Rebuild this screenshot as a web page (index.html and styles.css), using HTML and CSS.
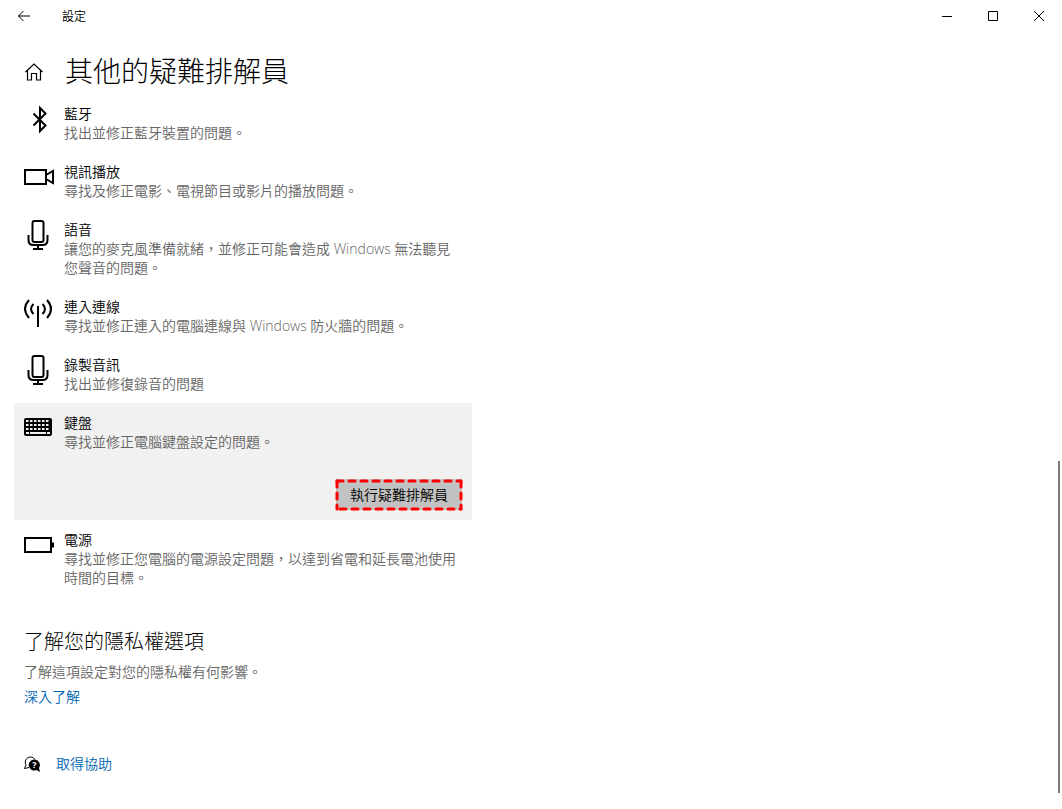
FILE: index.html
```html
<!DOCTYPE html>
<html lang="zh-Hant">
<head>
  <meta charset="UTF-8">
  <meta name="viewport" content="width=device-width, initial-scale=1.0">
  <title>設定</title>
  <link rel="stylesheet" href="styles.css">
</head>
<body>
  <header class="titlebar">
    <button class="back" aria-label="返回">
      <svg width="14" height="12" viewBox="0 0 14 12"><path d="M13 6H1.500M6.500 1L1.500 6l5 5"/></svg>
    </button>
    <span class="app-name">設定</span>
    <div class="window-controls">
      <button aria-label="最小化"><svg width="10" height="10" viewBox="0 0 10 10"><path d="M0 5.500H10"/></svg></button>
      <button aria-label="最大化"><svg width="10" height="10" viewBox="0 0 10 10"><path d="M.5.5h9v9h-9z"/></svg></button>
      <button aria-label="關閉"><svg width="10" height="10" viewBox="0 0 10 10"><path d="M0 0l10 10M10 0L0 10"/></svg></button>
    </div>
  </header>

  <main class="page">
    <div class="page-head">
      <a class="home" href="#" aria-label="首頁">
        <svg width="20" height="20" viewBox="0 0 20 20"><path d="M1.500 11L10 3l8.500 8M3.500 9.500V19h4v-6.500h5V19h4V9.500"/></svg>
      </a>
      <h1>其他的疑難排解員</h1>
    </div>

    <ul class="list">
      <li class="item">
        <svg class="icon" width="30" height="30" viewBox="0 0 30 30"><path d="M9.500 9.500l12 12L16 27V4l5.500 5.500-12 12"/></svg>
        <div class="text">
          <h2>藍牙</h2>
          <p>找出並修正藍牙裝置的問題。</p>
        </div>
      </li>
      <li class="item">
        <svg class="icon" width="30" height="30" viewBox="0 0 30 30"><path d="M1 8h21v14H1zM22 13l7-4v12l-7-4"/></svg>
        <div class="text">
          <h2>視訊播放</h2>
          <p>尋找及修正電影、電視節目或影片的播放問題。</p>
        </div>
      </li>
      <li class="item">
        <svg class="icon" width="30" height="30" viewBox="0 0 30 30"><rect x="8.500" y="1" width="11" height="21" rx="2"/><path d="M4.500 15v5q0 5 5 5h9q5 0 5-5v-5M14 25v4M9 29h10"/></svg>
        <div class="text">
          <h2>語音</h2>
          <p>讓您的麥克風準備就緒，並修正可能會造成 Windows 無法聽見您聲音的問題。</p>
        </div>
      </li>
      <li class="item">
        <svg class="icon" width="30" height="30" viewBox="0 0 30 30"><path d="M14 9v21M5 3q-8 9 0 18M9.500 7q-5 5 0 10M23 3q8 9 0 18M18.500 7q5 5 0 10"/></svg>
        <div class="text">
          <h2>連入連線</h2>
          <p>尋找並修正連入的電腦連線與 Windows 防火牆的問題。</p>
        </div>
      </li>
      <li class="item">
        <svg class="icon" width="30" height="30" viewBox="0 0 30 30"><rect x="8.500" y="1" width="11" height="21" rx="2"/><path d="M4.500 15v5q0 5 5 5h9q5 0 5-5v-5M14 25v4M9 29h10"/></svg>
        <div class="text">
          <h2>錄製音訊</h2>
          <p>找出並修復錄音的問題</p>
        </div>
      </li>
      <li class="item selected">
        <svg class="icon" width="30" height="30" viewBox="0 0 30 30">
          <rect class="solid" x="0" y="5" width="28" height="18" rx="2"/>
          <path class="keys" d="M2 8h24M2 12h24M2 16h24" stroke-dasharray="2.500 1.500"/>
          <path class="keys" d="M2 20h3M6 20h16M23 20h3"/>
        </svg>
        <div class="text">
          <h2>鍵盤</h2>
          <p>尋找並修正電腦鍵盤設定的問題。</p>
          <button class="run">執行疑難排解員
            <svg class="outline" aria-hidden="true">
              <line x1="1" y1="2" x2="125" y2="2"/>
              <line x1="4" y1="30" x2="125" y2="30"/>
              <line x1="1" y1="2" x2="1" y2="30"/>
              <line x1="125" y1="2" x2="125" y2="30"/>
            </svg>
          </button>
        </div>
      </li>
      <li class="item">
        <svg class="icon" width="30" height="30" viewBox="0 0 30 30"><path d="M1 8h26v14H1zM29 12.500v5"/></svg>
        <div class="text">
          <h2>電源</h2>
          <p>尋找並修正您電腦的電源設定問題，以達到省電和延長電池使用時間的目標。</p>
        </div>
      </li>
    </ul>

    <section class="privacy">
      <h2>了解您的隱私權選項</h2>
      <p>了解這項設定對您的隱私權有何影響。</p>
      <a href="#">深入了解</a>
    </section>

    <div class="help">
      <svg width="16" height="16" viewBox="0 0 16 16">
        <path d="M2 9A5 5 0 1 1 11 3.500M2 9L.5 12.500l4.500-1"/>
        <path class="solid" d="M10.500 3.500a5.500 5.500 0 1 0 2 10.500l3.500 2-1-4a5.500 5.500 0 0 0-4.500-8.500z"/>
        <text class="mark" x="10.500" y="12" text-anchor="middle">?</text>
      </svg>
      <a href="#">取得協助</a>
    </div>
  </main>

  <div class="scroll-thumb"></div>
</body>
</html>
```

FILE: styles.css
```css
body {
  margin: 0;
  background: #fff;
  color: #000;
  font-family: "Open Sans", "Noto Sans CJK TC", sans-serif;
  font-size: 14px;
  font-weight: 350;
  line-height: 19px;
}

h1, h2, p, ul {
  margin: 0;
  padding: 0;
  font-weight: 350;
}

button {
  font: inherit;
  color: inherit;
  border: none;
  background: none;
  padding: 0;
}

svg {
  fill: none;
  stroke: #000;
  display: block;
}

a {
  color: #0066b4;
  text-decoration: none;
}

.titlebar {
  display: flex;
  align-items: center;
  height: 32px;
}

.back {
  display: grid;
  place-items: center;
  width: 48px;
  height: 32px;
}

.app-name {
  margin-left: 14px;
  font-size: 12px;
}

.window-controls {
  display: flex;
  margin-left: auto;
}

.window-controls button {
  display: grid;
  place-items: center;
  width: 46px;
  height: 32px;
}

.page {
  padding: 0 14px;
}

.page-head {
  display: flex;
  align-items: center;
  height: 62px;
  padding: 16px 10px 0;
  box-sizing: border-box;
}

.home {
  width: 41px;
}

.home svg {
  stroke-width: 1.2;
}

.page-head h1 {
  font-size: 28px;
  font-weight: 300;
  line-height: 36px;
}

.list {
  list-style: none;
  max-width: 458px;
}

.item {
  display: flex;
  gap: 10px;
  padding: 10px;
}

.icon {
  flex: none;
  stroke-width: 2;
}

.text {
  flex: 1;
  display: flex;
  flex-direction: column;
}

.item h2 {
  font-size: 14px;
}

.item p, .privacy p {
  color: #666;
}

.selected {
  background: #f1f1f1;
}

.solid {
  fill: #000;
  stroke: none;
}

.keys {
  stroke: #f1f1f1;
}

.run {
  position: relative;
  align-self: flex-end;
  height: 31px;
  margin-top: 28px;
  padding: 0 14px;
  background: #c2c2c2;
}

.outline {
  position: absolute;
  inset: 0;
  width: 100%;
  height: 100%;
  overflow: visible;
  stroke: #f00;
  stroke-width: 3;
  stroke-linecap: round;
  stroke-dasharray: 6 6;
}

.privacy {
  padding: 31px 10px 0;
}

.privacy h2 {
  font-size: 20px;
  font-weight: 300;
  line-height: 28px;
  margin-bottom: 6px;
}

.privacy a {
  display: inline-block;
  margin-top: 6px;
}

.help {
  display: flex;
  align-items: center;
  gap: 16px;
  padding: 48px 10px 36px;
}

.mark {
  fill: #fff;
  stroke: none;
  font-size: 9px;
  font-weight: 700;
}

.scroll-thumb {
  position: fixed;
  right: 2px;
  top: 57%;
  bottom: 2%;
  width: 2px;
  background: #7a7a7a;
}
```
